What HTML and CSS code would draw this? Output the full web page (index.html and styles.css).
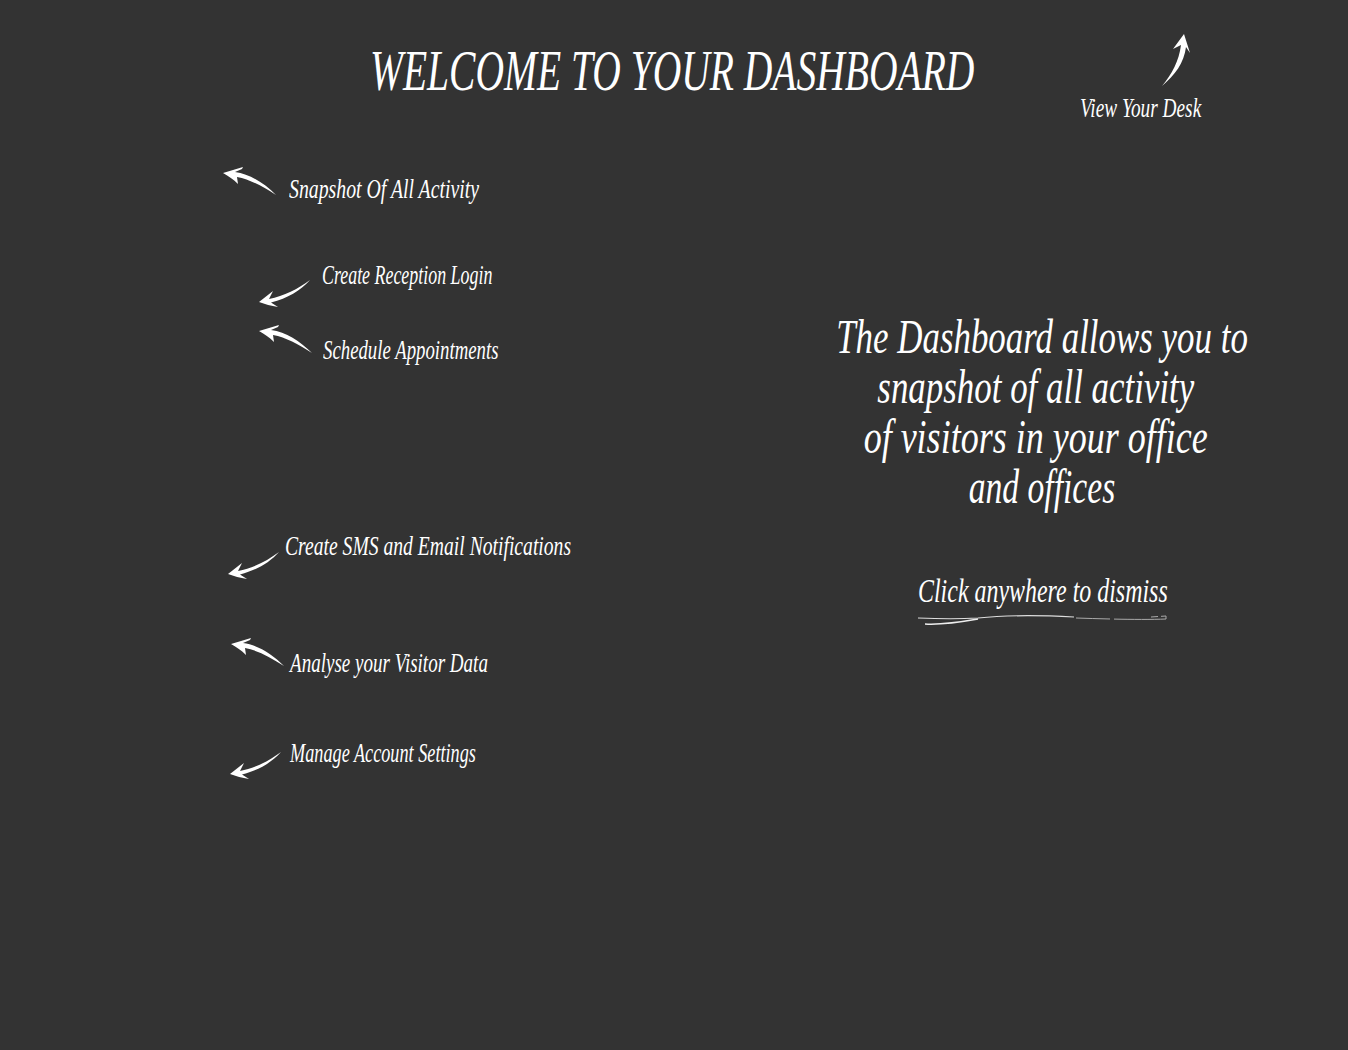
FILE: index.html
```html
<!DOCTYPE html>
<html lang="en">
<head>
    <meta charset="UTF-8">
    <meta name="viewport" content="width=device-width, initial-scale=1.0">
    <title>Dashboard Tour</title>
    <link rel="stylesheet" href="styles.css">
</head>
<body>
    <svg class="defs" width="0" height="0">
        <symbol id="arrow-up-left" viewBox="0 0 54 30">
            <path d="M1 7 L21 1 L20 3 L13 6 C28 8 42 17 54 29 C40 20 28 13.5 15 11 L16 18 C11 13 6 10 1 7Z"/>
        </symbol>
        <symbol id="arrow-down-left" viewBox="0 0 54 30">
            <path d="M52 1 C42 12 30 19 13 23.5 L20 28 C13 27 7 25 1 23 L15 12 L11 20 C26 17 40 10 52 1Z"/>
        </symbol>
    </svg>

    <div class="board">
        <h1 class="title">WELCOME TO YOUR DASHBOARD</h1>

        <svg class="arrow arrow-desk" viewBox="0 0 32 55"><path d="M24 1 L30 20 L26 14 C24 30 15 42 2 53 C12 41 19 28 21 12 L13 16Z"/></svg>
        <span class="note note-desk">View Your Desk</span>

        <svg class="arrow arrow-snapshot"><use href="#arrow-up-left"/></svg>
        <span class="note note-snapshot">Snapshot Of All Activity</span>

        <svg class="arrow arrow-reception"><use href="#arrow-down-left"/></svg>
        <span class="note note-reception">Create Reception Login</span>

        <svg class="arrow arrow-schedule"><use href="#arrow-up-left"/></svg>
        <span class="note note-schedule">Schedule Appointments</span>

        <svg class="arrow arrow-sms"><use href="#arrow-down-left"/></svg>
        <span class="note note-sms">Create SMS and Email Notifications</span>

        <svg class="arrow arrow-analyse"><use href="#arrow-up-left"/></svg>
        <span class="note note-analyse">Analyse your Visitor Data</span>

        <svg class="arrow arrow-account"><use href="#arrow-down-left"/></svg>
        <span class="note note-account">Manage Account Settings</span>

        <div class="intro">
            <p class="intro-line">The Dashboard allows you to</p>
            <p class="intro-line intro-line-left">snapshot of all activity</p>
            <p class="intro-line intro-line-left intro-line-wide">of visitors in your office</p>
            <p class="intro-line intro-line-narrow">and offices</p>
        </div>

        <p class="dismiss">Click anywhere to dismiss</p>
        <svg class="underline" viewBox="0 0 252 13">
            <path class="stroke" d="M2 5 C25 6 45 6 62 5 C90 2 120 2 158 4"/>
            <path class="stroke stroke-thick" d="M9 11 C25 12 45 9 62 6"/>
            <path class="stroke stroke-faint" d="M160 5 C190 6 225 7 250 6 L250 3 L235 4"/>
        </svg>
    </div>
</body>
</html>
```

FILE: styles.css
```css
body {
    margin: 0;
    background-color: #333;
    color: #fff;
    font-family: "Liberation Serif", "DejaVu Serif", serif;
    font-style: italic;
}
.defs {
    position: absolute;
}
.board {
    position: relative;
    width: 1348px;
    height: 1050px;
    overflow: hidden;
}

/* heading */
.title {
    position: absolute;
    left: 370px;
    top: 39px;
    margin: 0;
    font-size: 56px;
    line-height: 64px;
    font-weight: normal;
    white-space: nowrap;
    transform-origin: left;
    transform: scaleX(0.706);
}

/* arrows */
.arrow {
    position: absolute;
    width: 54px;
    height: 30px;
    fill: #fff;
}
.arrow-desk { left: 1160px; top: 33px; width: 32px; height: 55px; }
.arrow-snapshot { left: 222px; top: 166px; }
.arrow-reception { left: 258px; top: 279px; }
.arrow-schedule { left: 258px; top: 324px; }
.arrow-sms { left: 227px; top: 551px; }
.arrow-analyse { left: 230px; top: 637px; }
.arrow-account { left: 229px; top: 751px; }

/* small labels */
.note {
    position: absolute;
    font-size: 27px;
    line-height: 30px;
    white-space: nowrap;
    transform-origin: left;
}
.note-desk { left: 1080px; top: 93px; transform: scaleX(0.715); }
.note-snapshot { left: 289px; top: 174px; transform: scaleX(0.733); }
.note-reception { left: 322px; top: 260px; transform: scaleX(0.663); }
.note-schedule { left: 323px; top: 335px; transform: scaleX(0.696); }
.note-sms { left: 285px; top: 531px; transform: scaleX(0.727); }
.note-analyse { left: 290px; top: 648px; transform: scaleX(0.705); }
.note-account { left: 290px; top: 738px; transform: scaleX(0.675); }

/* right hand text */
.intro {
    position: absolute;
    left: 692px;
    top: 312px;
    width: 700px;
    text-align: center;
    font-size: 48px;
    line-height: 50px;
}
.intro-line {
    margin: 0;
    white-space: nowrap;
    transform: scaleX(0.727);
}
.intro-line-left {
    padding-right: 17px;
}
.intro-line-wide {
    transform: scaleX(0.75);
}
.intro-line-narrow {
    transform: scaleX(0.7);
}
.dismiss {
    position: absolute;
    left: 918px;
    top: 573px;
    margin: 0;
    font-size: 34px;
    line-height: 36px;
    white-space: nowrap;
    transform-origin: left;
    transform: scaleX(0.704);
}
.underline {
    position: absolute;
    left: 916px;
    top: 613px;
    width: 252px;
    height: 13px;
    fill: none;
}
.stroke {
    stroke: #ddd;
    stroke-width: 1.2;
}
.stroke-thick {
    stroke: #eee;
    stroke-width: 1.6;
}
.stroke-faint {
    stroke: #aaa;
    stroke-width: 1;
    stroke-dasharray: 34 4 60 3;
}
```
